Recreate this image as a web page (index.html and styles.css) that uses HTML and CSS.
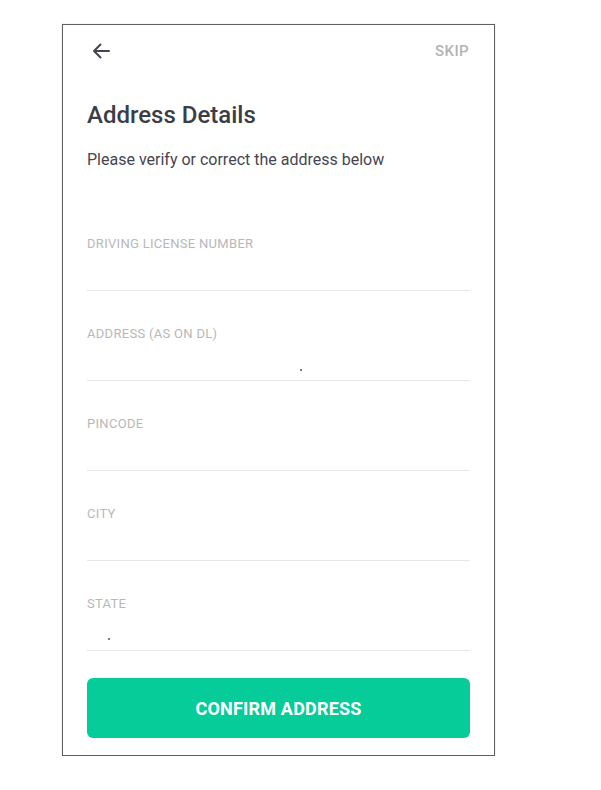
FILE: index.html
```html
<!DOCTYPE html>
<html lang="en">
<head>
<meta charset="utf-8">
<title>Address Details</title>
<link rel="stylesheet" href="styles.css">
</head>
<body>
<div class="frame">
  <div class="header">
    <svg class="back" width="18" height="16" viewBox="0 0 18 16" aria-label="Back">
      <path d="M17 8H2M8.5 1.5L2 8l6.5 6.5" fill="none" stroke="#45474f" stroke-width="2" stroke-linecap="round" stroke-linejoin="round"/>
    </svg>
    <span class="skip">SKIP</span>
  </div>
  <h1 class="title">Address Details</h1>
  <p class="subtitle">Please verify or correct the address below</p>

  <div class="field">
    <div class="label">DRIVING LICENSE NUMBER</div>
    <div class="input"></div>
  </div>
  <div class="field">
    <div class="label">ADDRESS (AS ON DL)</div>
    <div class="input"><span class="speck speck-address"></span></div>
  </div>
  <div class="field">
    <div class="label">PINCODE</div>
    <div class="input"></div>
  </div>
  <div class="field">
    <div class="label">CITY</div>
    <div class="input"></div>
  </div>
  <div class="field">
    <div class="label">STATE</div>
    <div class="input"><span class="speck speck-state"></span></div>
  </div>

  <button class="confirm">CONFIRM ADDRESS</button>
</div>
</body>
</html>
```
FILE: styles.css
```css
html, body {
  margin: 0;
  padding: 0;
  background: #ffffff;
}

body {
  font-family: Roboto, "Liberation Sans", Arial, sans-serif;
}

.frame {
  margin: 24px 0 0 62px;
  width: 383px;
  height: 730px;
  padding: 0 24px;
  border: 1px solid #5f5f5f;
  box-shadow: 0 0 1px rgba(0,0,0,0.25);
  display: flex;
  flex-direction: column;
}

.header {
  margin-top: 17px;
  height: 18px;
  display: flex;
  align-items: center;
  justify-content: space-between;
}

.back {
  display: block;
  margin-left: 5px;
}

.skip {
  font-size: 15px;
  font-weight: 500;
  color: #b3b3b3;
  letter-spacing: 0.4px;
  margin-right: 1px;
}

.title {
  margin: 40px 0 0;
  font-size: 24px;
  line-height: 30px;
  font-weight: 500;
  color: #3b3d48;
}

.subtitle {
  margin: 19px 0 0;
  font-size: 16px;
  line-height: 22px;
  color: #444650;
}

.field {
  display: flex;
  flex-direction: column;
  margin-top: 35px;
}

.subtitle + .field {
  margin-top: 65px;
}

.label {
  font-size: 13px;
  line-height: 16px;
  color: #b8b8b8;
  letter-spacing: 0.3px;
}

.input {
  position: relative;
  height: 38px;
  border-bottom: 1px solid #e6e6e6;
}

.speck {
  position: absolute;
  width: 2px;
  height: 2px;
  border-radius: 1px;
  background: #555;
}

.speck-address {
  left: 213px;
  top: 27px;
}

.speck-state {
  left: 21px;
  top: 26px;
}

.confirm {
  margin-top: 27px;
  height: 60px;
  width: 100%;
  border: none;
  border-radius: 6px;
  background: #05cc98;
  color: #ffffff;
  font-family: Roboto, "Liberation Sans", Arial, sans-serif;
  font-size: 18px;
  font-weight: 700;
  letter-spacing: 0.2px;
  padding: 0;
}
```
